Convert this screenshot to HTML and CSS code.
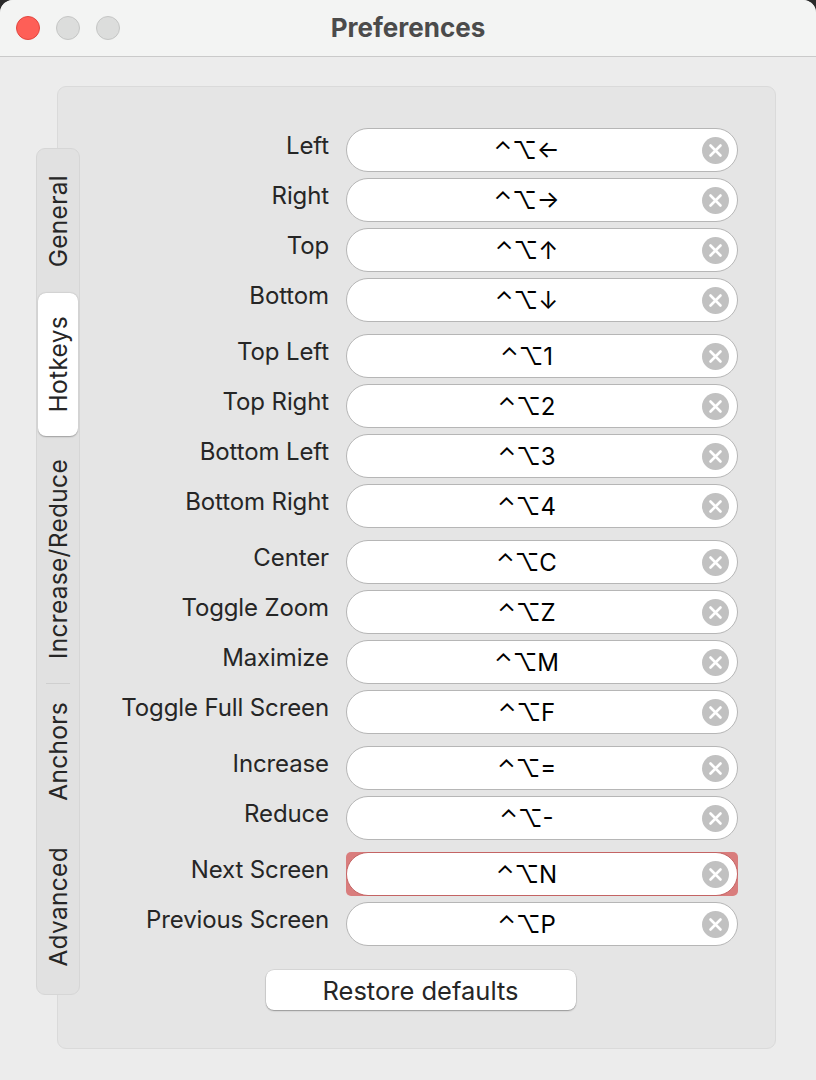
FILE: index.html
```html
<!DOCTYPE html>
<html>
<head>
<meta charset="utf-8">
<title>Preferences</title>
<link rel="stylesheet" href="styles.css">
</head>
<body>
<div class="window">
  <div class="titlebar">
    <div class="lights">
      <span class="light close"></span>
      <span class="light off"></span>
      <span class="light off"></span>
    </div>
    <div class="title">Preferences</div>
  </div>
  <div class="content">
    <div class="tabbar">
      <div class="tab t-general"><span>General</span></div>
      <div class="tab t-hotkeys selected"><span>Hotkeys</span></div>
      <div class="tab t-incred"><span>Increase/Reduce</span></div>
      <div class="tab-sep"></div>
      <div class="tab t-anchors"><span>Anchors</span></div>
      <div class="tab t-advanced"><span>Advanced</span></div>
    </div>
    <div class="panel">
      <div class="groups">
        <div class="group">
          <div class="label">Left</div>
          <div class="field"><span class="keys">⌃⌥←</span><span class="clear"><svg width="27" height="27" viewBox="0 0 27 27"><circle cx="13.5" cy="13.5" r="13.5" fill="#c1c1c1"/><path d="M8.5 8.5 L18.5 18.5 M18.5 8.5 L8.5 18.5" stroke="#fff" stroke-width="2.6" stroke-linecap="round"/></svg></span></div>
          <div class="label">Right</div>
          <div class="field"><span class="keys">⌃⌥→</span><span class="clear"><svg width="27" height="27" viewBox="0 0 27 27"><circle cx="13.5" cy="13.5" r="13.5" fill="#c1c1c1"/><path d="M8.5 8.5 L18.5 18.5 M18.5 8.5 L8.5 18.5" stroke="#fff" stroke-width="2.6" stroke-linecap="round"/></svg></span></div>
          <div class="label">Top</div>
          <div class="field"><span class="keys">⌃⌥↑</span><span class="clear"><svg width="27" height="27" viewBox="0 0 27 27"><circle cx="13.5" cy="13.5" r="13.5" fill="#c1c1c1"/><path d="M8.5 8.5 L18.5 18.5 M18.5 8.5 L8.5 18.5" stroke="#fff" stroke-width="2.6" stroke-linecap="round"/></svg></span></div>
          <div class="label">Bottom</div>
          <div class="field"><span class="keys">⌃⌥↓</span><span class="clear"><svg width="27" height="27" viewBox="0 0 27 27"><circle cx="13.5" cy="13.5" r="13.5" fill="#c1c1c1"/><path d="M8.5 8.5 L18.5 18.5 M18.5 8.5 L8.5 18.5" stroke="#fff" stroke-width="2.6" stroke-linecap="round"/></svg></span></div>
        </div>
        <div class="group">
          <div class="label">Top Left</div>
          <div class="field"><span class="keys">⌃⌥1</span><span class="clear"><svg width="27" height="27" viewBox="0 0 27 27"><circle cx="13.5" cy="13.5" r="13.5" fill="#c1c1c1"/><path d="M8.5 8.5 L18.5 18.5 M18.5 8.5 L8.5 18.5" stroke="#fff" stroke-width="2.6" stroke-linecap="round"/></svg></span></div>
          <div class="label">Top Right</div>
          <div class="field"><span class="keys">⌃⌥2</span><span class="clear"><svg width="27" height="27" viewBox="0 0 27 27"><circle cx="13.5" cy="13.5" r="13.5" fill="#c1c1c1"/><path d="M8.5 8.5 L18.5 18.5 M18.5 8.5 L8.5 18.5" stroke="#fff" stroke-width="2.6" stroke-linecap="round"/></svg></span></div>
          <div class="label">Bottom Left</div>
          <div class="field"><span class="keys">⌃⌥3</span><span class="clear"><svg width="27" height="27" viewBox="0 0 27 27"><circle cx="13.5" cy="13.5" r="13.5" fill="#c1c1c1"/><path d="M8.5 8.5 L18.5 18.5 M18.5 8.5 L8.5 18.5" stroke="#fff" stroke-width="2.6" stroke-linecap="round"/></svg></span></div>
          <div class="label">Bottom Right</div>
          <div class="field"><span class="keys">⌃⌥4</span><span class="clear"><svg width="27" height="27" viewBox="0 0 27 27"><circle cx="13.5" cy="13.5" r="13.5" fill="#c1c1c1"/><path d="M8.5 8.5 L18.5 18.5 M18.5 8.5 L8.5 18.5" stroke="#fff" stroke-width="2.6" stroke-linecap="round"/></svg></span></div>
        </div>
        <div class="group">
          <div class="label">Center</div>
          <div class="field"><span class="keys">⌃⌥C</span><span class="clear"><svg width="27" height="27" viewBox="0 0 27 27"><circle cx="13.5" cy="13.5" r="13.5" fill="#c1c1c1"/><path d="M8.5 8.5 L18.5 18.5 M18.5 8.5 L8.5 18.5" stroke="#fff" stroke-width="2.6" stroke-linecap="round"/></svg></span></div>
          <div class="label">Toggle Zoom</div>
          <div class="field"><span class="keys">⌃⌥Z</span><span class="clear"><svg width="27" height="27" viewBox="0 0 27 27"><circle cx="13.5" cy="13.5" r="13.5" fill="#c1c1c1"/><path d="M8.5 8.5 L18.5 18.5 M18.5 8.5 L8.5 18.5" stroke="#fff" stroke-width="2.6" stroke-linecap="round"/></svg></span></div>
          <div class="label">Maximize</div>
          <div class="field"><span class="keys">⌃⌥M</span><span class="clear"><svg width="27" height="27" viewBox="0 0 27 27"><circle cx="13.5" cy="13.5" r="13.5" fill="#c1c1c1"/><path d="M8.5 8.5 L18.5 18.5 M18.5 8.5 L8.5 18.5" stroke="#fff" stroke-width="2.6" stroke-linecap="round"/></svg></span></div>
          <div class="label">Toggle Full Screen</div>
          <div class="field"><span class="keys">⌃⌥F</span><span class="clear"><svg width="27" height="27" viewBox="0 0 27 27"><circle cx="13.5" cy="13.5" r="13.5" fill="#c1c1c1"/><path d="M8.5 8.5 L18.5 18.5 M18.5 8.5 L8.5 18.5" stroke="#fff" stroke-width="2.6" stroke-linecap="round"/></svg></span></div>
        </div>
        <div class="group">
          <div class="label">Increase</div>
          <div class="field"><span class="keys">⌃⌥=</span><span class="clear"><svg width="27" height="27" viewBox="0 0 27 27"><circle cx="13.5" cy="13.5" r="13.5" fill="#c1c1c1"/><path d="M8.5 8.5 L18.5 18.5 M18.5 8.5 L8.5 18.5" stroke="#fff" stroke-width="2.6" stroke-linecap="round"/></svg></span></div>
          <div class="label">Reduce</div>
          <div class="field"><span class="keys">⌃⌥-</span><span class="clear"><svg width="27" height="27" viewBox="0 0 27 27"><circle cx="13.5" cy="13.5" r="13.5" fill="#c1c1c1"/><path d="M8.5 8.5 L18.5 18.5 M18.5 8.5 L8.5 18.5" stroke="#fff" stroke-width="2.6" stroke-linecap="round"/></svg></span></div>
        </div>
        <div class="group">
          <div class="label">Next Screen</div>
          <div class="recording"><div class="field rec"><span class="keys">⌃⌥N</span><span class="clear"><svg width="27" height="27" viewBox="0 0 27 27"><circle cx="13.5" cy="13.5" r="13.5" fill="#c1c1c1"/><path d="M8.5 8.5 L18.5 18.5 M18.5 8.5 L8.5 18.5" stroke="#fff" stroke-width="2.6" stroke-linecap="round"/></svg></span></div></div>
          <div class="label">Previous Screen</div>
          <div class="field"><span class="keys">⌃⌥P</span><span class="clear"><svg width="27" height="27" viewBox="0 0 27 27"><circle cx="13.5" cy="13.5" r="13.5" fill="#c1c1c1"/><path d="M8.5 8.5 L18.5 18.5 M18.5 8.5 L8.5 18.5" stroke="#fff" stroke-width="2.6" stroke-linecap="round"/></svg></span></div>
        </div>
      </div>
      <div class="actions">
        <button class="restore">Restore defaults</button>
      </div>
    </div>
  </div>
</div>
</body>
</html>
```

FILE: styles.css
```css
html, body {
  margin: 0;
  padding: 0;
  background: #2a2a2a;
}
body {
  width: 816px;
  height: 1080px;
  overflow: hidden;
  font-family: "Inter", "Liberation Sans", "DejaVu Sans", sans-serif;
}
.window {
  width: 816px;
  height: 1080px;
  background: #ececec;
  border-radius: 13px 13px 0 0;
  overflow: hidden;
  display: flex;
  flex-direction: column;
}
.titlebar {
  height: 56px;
  flex: none;
  background: #f3f4f3;
  border-bottom: 1px solid #cacaca;
  display: grid;
  grid-template-columns: 1fr;
  align-items: center;
}
.lights, .title {
  grid-row: 1;
  grid-column: 1;
}
.lights {
  display: flex;
  gap: 16px;
  padding-left: 16px;
  align-items: center;
}
.light {
  width: 24px;
  height: 24px;
  border-radius: 50%;
  box-sizing: border-box;
}
.light.close {
  background: #fe5f57;
  border: 1px solid #e2463f;
}
.light.off {
  background: #dcdddc;
  border: 1px solid #c5c6c5;
}
.title {
  text-align: center;
  font-size: 26px;
  font-weight: 700;
  color: #4b4b4b;
  padding-left: 0;
  margin-top: -2px;
}
.content {
  flex: 1;
  display: flex;
  padding: 29px 40px 31px 36px;
  min-height: 0;
}
.tabbar {
  flex: none;
  width: 42px;
  height: 845px;
  margin-top: 62px;
  margin-right: -23px;
  position: relative;
  z-index: 1;
  background: #e1e1e1;
  border: 1px solid #d6d6d6;
  border-radius: 9px;
  display: flex;
  flex-direction: column;
  align-items: center;
  padding: 0;
}
.tab {
  width: 40px;
  display: flex;
  align-items: center;
  justify-content: center;
  flex: none;
  box-sizing: border-box;
}
.tab span {
  writing-mode: vertical-rl;
  transform: rotate(180deg);
  font-size: 24.5px;
  color: #262626;
  letter-spacing: 0.3px;
  white-space: nowrap;
}
.t-general { height: 144px; }
.t-hotkeys { height: 143px; }
.t-incred { height: 247px; }
.t-anchors { height: 135px; }
.t-advanced { height: 175px; }
.tab.selected {
  background: #ffffff;
  border-radius: 8px;
  box-shadow: 0 0.5px 1.5px rgba(0,0,0,0.3);
}
.tab-sep {
  width: 24px;
  height: 1px;
  background: #cfcfcf;
  flex: none;
}
.panel {
  flex: 1;
  background: #e5e5e5;
  border: 1px solid #dadada;
  border-radius: 9px;
  padding: 41px 37px 0 0;
  display: flex;
  flex-direction: column;
}
.groups {
  display: flex;
  flex-direction: column;
  gap: 12px;
}
.group {
  display: grid;
  grid-template-columns: 1fr 392px;
  column-gap: 17px;
  row-gap: 6px;
}
.label {
  align-self: start;
  padding-top: 3px;
  text-align: right;
  font-size: 24px;
  color: #262626;
  white-space: nowrap;
  letter-spacing: -0.12px;
}
.field {
  height: 44px;
  box-sizing: border-box;
  background: #ffffff;
  border: 1px solid #b6b6b6;
  border-radius: 22px;
  display: flex;
  align-items: center;
  padding: 0 8px 0 4px;
}
.keys {
  flex: 1;
  text-align: center;
  font-family: "Inter", "DejaVu Sans", sans-serif;
  font-size: 24px;
  color: #000;
}
.clear {
  width: 27px;
  height: 27px;
  display: flex;
}
.recording {
  background: #d97d7d;
  border-radius: 5px;
}
.field.rec {
  border-color: #c46464;
}
.actions {
  display: flex;
  justify-content: center;
  padding-left: 45px;
  margin-top: 24px;
}
.restore {
  width: 310px;
  height: 40px;
  background: #ffffff;
  border: none;
  border-radius: 8px;
  box-shadow: 0 0 0 0.5px rgba(0,0,0,0.12), 0 1px 1.5px rgba(0,0,0,0.3);
  font-family: "Inter", "Liberation Sans", sans-serif;
  font-size: 25.5px;
  color: #262626;
  padding: 0;
}
```
